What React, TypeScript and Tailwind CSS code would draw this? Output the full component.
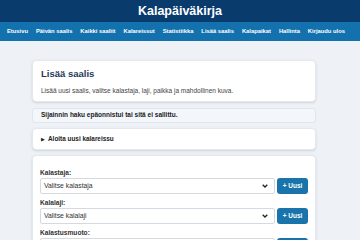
import React from 'react';

const navItems = [
  'Etusivu',
  'Päivän saalis',
  'Kaikki saaliit',
  'Kalareissut',
  'Statistiikka',
  'Lisää saalis',
  'Kalapaikat',
  'Hallinta',
  'Kirjaudu ulos',
];

const fields = [
  { label: 'Kalastaja:', placeholder: 'Valitse kalastaja' },
  { label: 'Kalalaji:', placeholder: 'Valitse kalalaji' },
  { label: 'Kalastusmuoto:', placeholder: 'Valitse kalastusmuoto' },
];

const Chevron: React.FC = () => (
  <svg width="6" height="4" viewBox="0 0 6 4" className="shrink-0">
    <path d="M0.7 0.7 L3 3 L5.3 0.7" fill="none" stroke="#222" strokeWidth="1.3" />
  </svg>
);

const App: React.FC = () => {
  return (
    <div className="min-h-[240px] w-[360px] bg-[#eef2f7] font-['Liberation_Sans',Arial,sans-serif] text-[#333]">
      <header className="h-[22px] bg-[#0a3b6d] flex items-center justify-center">
        <h1 className="text-white font-bold text-[12.5px] leading-none">Kalapäiväkirja</h1>
      </header>

      <nav className="h-[19px] bg-[#1372ae] flex items-center pl-[7px] gap-[8px]">
        {navItems.map((item) => (
          <a key={item} className="text-white font-bold text-[5.8px] leading-none whitespace-nowrap">
            {item}
          </a>
        ))}
      </nav>

      <main className="ml-[32px] w-[284px] pt-[19px] flex flex-col gap-[6px]">
        <section className="bg-white rounded-[4px] border border-[#e3e8ef] shadow-sm h-[42px] px-[8px] pt-[7px]">
          <h2 className="text-[#1e3a5a] font-bold text-[9.5px] leading-[12px]">Lisää saalis</h2>
          <p className="mt-[6px] text-[6.5px] leading-[9px] text-[#444]">
            Lisää uusi saalis, valitse kalastaja, laji, paikka ja mahdollinen kuva.
          </p>
        </section>

        <div className="bg-[#f3f7fb] rounded-[3px] border border-[#e0e6ee] h-[15px] px-[8px] flex items-center">
          <span className="font-bold text-[6.5px] text-[#222] leading-none">
            Sijainnin haku epäonnistui tai sitä ei sallittu.
          </span>
        </div>

        <div className="-mt-[1px] bg-white rounded-[4px] border border-[#e3e8ef] shadow-sm h-[22px] px-[8px] flex items-center gap-[3px]">
          <span className="text-[5px] text-[#222] leading-none">▶</span>
          <span className="font-bold text-[6.4px] text-[#222] leading-none">Aloita uusi kalareissu</span>
        </div>

        <section className="-mt-[1px] bg-white rounded-[4px] border border-[#e3e8ef] shadow-sm px-[7px] pt-[13px] pb-[10px] flex flex-col gap-[5px]">
          {fields.map((f) => (
            <div key={f.label} className="flex flex-col gap-[1px]">
              <label className="font-bold text-[6.6px] leading-[8px] text-[#333]">{f.label}</label>
              <div className="flex items-center gap-[2px]">
                <div className="flex-1 h-[16px] border border-[#d5dae1] rounded-[2px] bg-white flex items-center justify-between pl-[3px] pr-[6px]">
                  <span className="text-[6.8px] text-[#333] leading-none">{f.placeholder}</span>
                  <Chevron />
                </div>
                <button className="w-[31px] h-[16px] rounded-[3px] bg-[#1874aa] text-white font-bold text-[6.5px] leading-none flex items-center justify-center">
                  + Uusi
                </button>
              </div>
            </div>
          ))}
        </section>
      </main>
    </div>
  );
};

export default App;
